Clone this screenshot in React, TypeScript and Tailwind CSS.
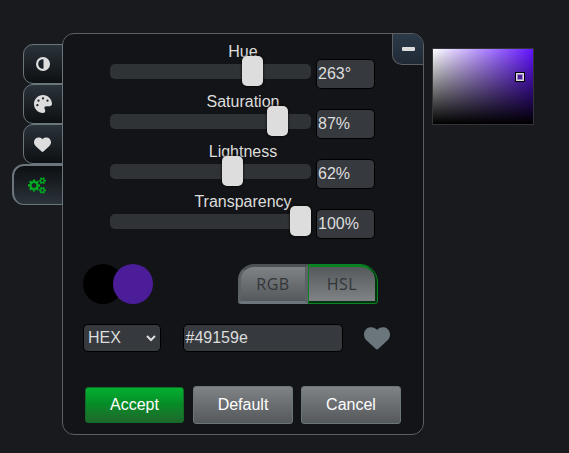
import React from "react";
import { FaPalette, FaHeart } from "react-icons/fa6";

const sliders = [
  { label: "Hue", value: "263°", left: 132 },
  { label: "Saturation", value: "87%", left: 157 },
  { label: "Lightness", value: "62%", left: 112 },
  { label: "Transparency", value: "100%", left: 180 },
];

function HalfCircle({ className }: { className?: string }) {
  return (
    <svg viewBox="0 0 14 14" className={className}>
      <circle cx="7" cy="7" r="5.9" fill="none" stroke="currentColor" strokeWidth="2.2" />
      <path d="M7.5 1 A6 6 0 0 1 7.5 13 Z" fill="currentColor" />
    </svg>
  );
}

function Gears({ className }: { className?: string }) {
  return (
    <svg viewBox="0 0 1920 1792" fill="currentColor" className={className}>
      <path
        fillRule="evenodd"
        d="M896 896q0-106-75-181t-181-75-181 75-75 181 75 181 181 75 181-75 75-181zM1280 805v185q0 10-7 19.5t-16 10.5l-155 24q-11 35-32 76 34 48 90 115 7 11 7 20 0 12-7 19-23 30-82.5 89.5t-78.5 59.5q-11 0-21-7l-115-90q-37 19-77 31-11 108-23 155-7 24-30 24h-186q-11 0-20-7.5t-10-17.5l-23-153q-34-10-75-31l-118 89q-7 7-20 7-11 0-21-8-144-133-144-160 0-9 7-19 10-14 41-53t47-61q-23-44-35-82l-152-24q-10-1-17-9.5t-7-19.5v-185q0-10 7-19.5t16-10.5l155-24q11-35 32-76-34-48-90-115-7-11-7-20 0-12 7-20 22-30 82-89t79-59q11 0 21 7l115 90q34-18 77-32 11-108 23-154 7-24 30-24h186q11 0 20 7.5t10 17.5l23 153q34 10 75 31l118-89q8-7 20-7 11 0 21 8 144 133 144 160 0 8-7 19-12 16-42 54t-45 60q23 48 34 82l152 23q10 2 17 10.5t7 19.5z"
      />
      {["", "translate(0 -1024)"].map((t) => (
        <path
          key={t}
          transform={t}
          fillRule="evenodd"
          d="M1920 1338v140q0 16-149 31-12 27-30 52 51 113 51 138 0 4-4 7-122 71-124 71-8 0-46-47t-52-68q-20 2-30 2t-30-2q-14 21-52 68t-46 47q-2 0-124-71-4-3-4-7 0-25 51-138-18-25-30-52-149-15-149-31v-140q0-16 149-31 13-29 30-52-51-113-51-138 0-4 4-7 4-2 35-20t59-34 30-16q8 0 46 46.5t52 67.5q20-2 30-2t30 2q51-71 92-112l6-2q4 0 124 70 4 3 4 7 0 25-51 138 17 23 30 52 149 15 149 31zM1664 1408q0-52-38-90t-90-38-90 38-38 90q0 53 37.5 90.5t90.5 37.5 90.5-37.5 37.5-90.5z"
        />
      ))}
    </svg>
  );
}

const tabs = [HalfCircle, FaPalette, FaHeart];

const field =
  "rounded-[5px] border border-black bg-[#36393e] text-[#ddd] flex items-center";

const button =
  "h-[38px] w-[100px] rounded-[3px] border border-[#6a767c] bg-gradient-to-b from-[#7f8386] to-[#55595c] text-white";

export default function App() {
  return (
    <div className="h-[453px] w-[569px] overflow-hidden bg-[#181a1d] font-['Liberation_Sans',Arial,sans-serif] text-[16px] leading-[18px] text-[#ddd]">
      <div className="flex items-start">
        <nav className="z-10 -mr-px mt-[44px] flex w-[63px] flex-col items-end">
          {tabs.map((Icon, i) => (
            <div
              key={i}
              className="flex h-10 w-[40px] items-center justify-center rounded-l-[10px] border border-[#6a767c] bg-gradient-to-b from-[#2b333b] to-[#0d1012]"
            >
              <Icon className={i === 0 ? "size-[14px]" : i === 1 ? "size-[18px]" : "mr-px size-[17px]"} />
            </div>
          ))}
          <div className="flex h-[41px] w-[51px] items-center rounded-l-[12px] border border-l-2 border-t-2 border-[#6a767c] bg-gradient-to-b from-[#0d1012] to-[#2b333b] pl-[14px] text-[#0a2]">
            <Gears className="h-[17px] w-[18px]" />
          </div>
        </nav>

        <main className="mt-[33px] h-[402px] w-[362px] rounded-xl border border-[#5d5e60] bg-[#131417]">
          <div className="flex h-[230px] justify-between">
            <div className="ml-[47px] w-[265px] pt-[8px]">
              {sliders.map((s) => (
                <div key={s.label} className="flex h-[50px]">
                  <div className="w-[201px]">
                    <div className="h-[22px] whitespace-nowrap pl-[65px] pt-px text-center">
                      <div className="-mx-8">{s.label}</div>
                    </div>
                    <div className="relative h-[15px] w-[201px] rounded-[5px] bg-[#303336]">
                      <div
                        className="absolute -top-2 h-[30px] w-[21px] rounded-[5px] bg-[#ddd] shadow-[0_0_3px_#000]"
                        style={{ left: s.left }}
                      />
                    </div>
                  </div>
                  <div className={`${field} ml-[5px] mt-[17px] h-[30px] w-[59px] pl-px`}>
                    {s.value}
                  </div>
                </div>
              ))}
            </div>
            <div className="flex h-[31px] w-[31px] items-center justify-center rounded-bl-[10px] rounded-tr-[11px] border-b border-l border-[#5d5e60] bg-gradient-to-b from-[#2b3a49] to-[#202a35]">
              <div className="h-[4px] w-[13px] rounded-[1px] bg-[#ddd]" />
            </div>
          </div>

          <div className="ml-5 flex h-10">
            <div className="size-10 rounded-full bg-black" />
            <div className="-ml-[10px] size-10 rounded-full bg-[#4b1d99]" />
            <div className="ml-[85px] flex h-10 font-['Open_Sans',sans-serif] text-[16px] font-medium tracking-[0.5px] text-[#333538]">
              <div className="flex w-[70px] items-center justify-center rounded-bl-[3px] rounded-tl-[16px] border-[3px] border-b-[#6a767c] border-l-[#5b6164] border-r-[#5b6164] border-t-[#4c5154] bg-gradient-to-b from-[#7f8386] to-[#55595c]">
                RGB
              </div>
              <div className="w-[70px] rounded-br-[3px] rounded-tr-[18px] border border-[#098322] bg-[#04330f] pb-[2px] pr-[2px]">
                <div className="flex h-full items-center justify-center rounded-tr-[15px] border-t-2 border-[#098322] bg-gradient-to-b from-[#55595c] to-[#7f8386]">
                  HSL
                </div>
              </div>
            </div>
          </div>

          <div className="ml-5 mt-5 flex h-7">
            <div className={`${field} w-[78px] justify-between pl-1 pr-[3px]`}>
              HEX
              <svg viewBox="0 0 12 12" className="size-3" fill="none" stroke="#ddd" strokeWidth="2">
                <path d="M2 4 L6 8 L10 4" />
              </svg>
            </div>
            <div className={`${field} ml-[22px] w-40 pl-[1.5px]`}>#49159e</div>
            <FaHeart className="ml-[21px] mt-[1px] size-[26px] text-[#6a767c]" />
          </div>

          <div className="ml-[22px] mt-[34px] flex">
            <button className="mr-[9px] mt-px h-9 w-[99px] rounded-[3px] border border-[#126c26] bg-gradient-to-b from-[#00b030] via-[#078a27] to-[#1b692c] text-white">
              Accept
            </button>
            <button className={`${button} mr-2`}>Default</button>
            <button className={button}>Cancel</button>
          </div>
        </main>

        <div className="relative ml-2 mt-12 h-[77px] w-[102px] border border-[#333539] bg-[linear-gradient(to_top,#000,transparent),linear-gradient(to_right,#fff,#6314ff)]">
          <div className="absolute left-[82px] top-[23px] size-[10px] border border-black bg-[#4b1d99]">
            <div className="size-full border border-[#ddd]">
              <div className="size-full border border-[#a58dcc]" />
            </div>
          </div>
        </div>
      </div>
    </div>
  );
}
